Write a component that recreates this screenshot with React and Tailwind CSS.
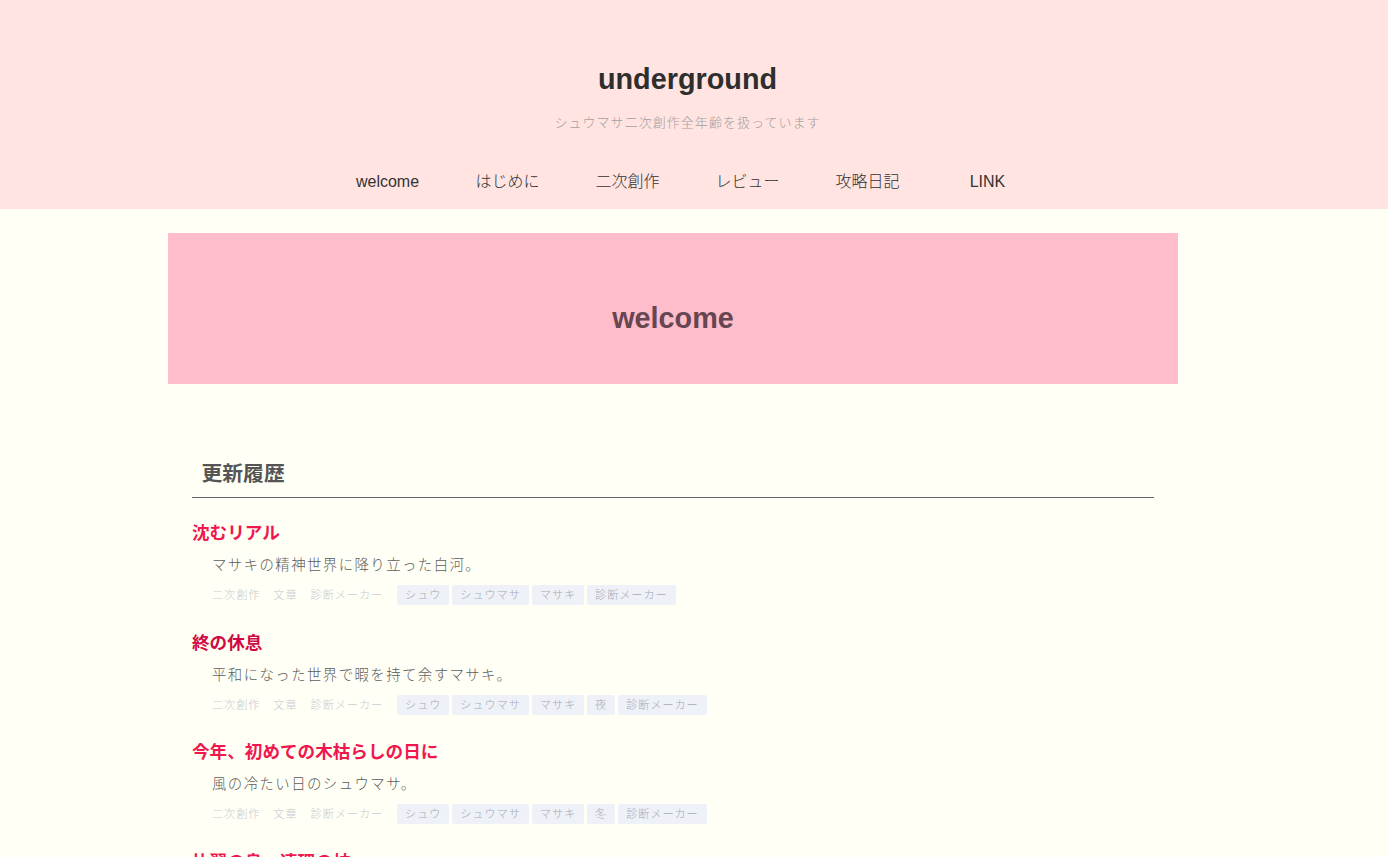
const nav = ["welcome", "はじめに", "二次創作", "レビュー", "攻略日記", "LINK"];
const posts = [
  { t: "沈むリアル", d: "マサキの精神世界に降り立った白河。", c: "text-[#f0174f]", tags: ["シュウ", "シュウマサ", "マサキ", "診断メーカー"] },
  { t: "終の休息", d: "平和になった世界で暇を持て余すマサキ。", c: "text-[#cf0a43]", tags: ["シュウ", "シュウマサ", "マサキ", "夜", "診断メーカー"] },
  { t: "今年、初めての木枯らしの日に", d: "風の冷たい日のシュウマサ。", c: "text-[#f0174f]", tags: ["シュウ", "シュウマサ", "マサキ", "冬", "診断メーカー"] },
  { t: "比翼の鳥、連理の枝", d: "", c: "text-[#f0174f]", tags: [] },
];

function Post({ p }) {
  return (
    <article className="mb-[25.5px]">
      <h3 className={`h-[24px] text-[17.6px] leading-[24px] font-bold ${p.c}`}>{p.t}</h3>
      <p className="mt-[8px] pl-[20px] h-[24px] text-[14.4px] leading-[24px] tracking-[1.44px] font-light text-[#5c5c5c]">{p.d}</p>
      <div className="mt-[8px] pl-[20px] h-[20px] flex items-center text-[11.2px] leading-[20px] tracking-[0.9px] font-light">
        <span className="text-[#c8cbd2]">二次創作</span>
        <span className="ml-[13px] text-[#c8cbd2]">文章</span>
        <span className="ml-[13px] text-[#c8cbd2]">診断メーカー</span>
        <div className="ml-[14px] flex gap-[3px]">
          {p.tags.map((t, i) => (
            <span key={i} className="h-[20px] px-[8px] rounded-[2px] bg-[#eef1f8] text-[#a8aab1]">{t}</span>
          ))}
        </div>
      </div>
    </article>
  );
}

export default function App() {
  return (
    <div className="h-[857px] overflow-hidden bg-[#fffff5] font-['Liberation_Sans','Noto_Sans_CJK_JP',sans-serif]">
      <header className="h-[209px] bg-[#ffe4e1] pr-[13px] flex flex-col items-center">
        <h1 className="mt-[61px] h-[36px] text-[28.8px] leading-[36px] font-bold text-[#2e2e2e]">underground</h1>
        <p className="mt-[16px] h-[20px] text-[13px] leading-[20px] tracking-[1.04px] font-light text-[#a6a0a0]">シュウマサ二次創作全年齢を扱っています</p>
        <nav className="mt-[39px] flex">
          {nav.map((n) => (
            <a key={n} className="w-[120px] h-[20px] text-center text-[16px] leading-[20px] font-light text-[#333333]">{n}</a>
          ))}
        </nav>
      </header>
      <main className="w-[1010px] ml-[168px] pt-[24px]">
        <section className="h-[151px] bg-[#ffbccb] flex items-center justify-center">
          <h2 className="text-[28.8px] leading-[36px] font-bold text-[#664650] mt-[18px]">welcome</h2>
        </section>
        <section className="px-[24px] pt-[72px]">
          <h2 className="h-[42px] border-b border-[#666666] pl-[9.5px] text-[20.8px] leading-[36px] font-bold text-[#555555]">更新履歴</h2>
          <div className="mt-[23px]">
            {posts.map((p, i) => <Post key={i} p={p} />)}
          </div>
        </section>
      </main>
    </div>
  );
}
